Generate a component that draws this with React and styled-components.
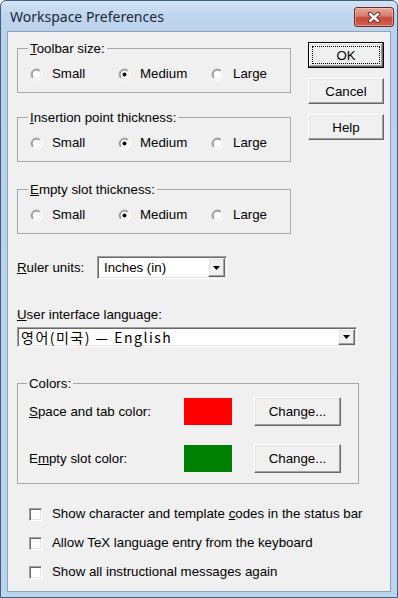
import styled, { createGlobalStyle, css } from 'styled-components'

const GlobalStyle = createGlobalStyle`
  html, body {
    margin: 0;
    padding: 0;
    background: #fff;
  }
  body {
    font-family: "Liberation Sans", Arial, sans-serif;
    font-size: 13.3px;
    color: #000;
  }
`

const sunken = css`
  box-sizing: border-box;
  border: 1px solid;
  border-color: #a0a0a0 #fff #fff #a0a0a0;
  box-shadow: inset 1px 1px #696969, inset -1px -1px #e3e3e3;
`

const raised = css`
  box-sizing: border-box;
  border: 1px solid;
  border-color: #fff #696969 #696969 #fff;
  box-shadow: inset -1px -1px #a0a0a0, inset 1px 1px #e3e3e3;
  background: #f0f0f0;
`

const RadioMark = ({ checked }) => (
  <svg width="13" height="13" viewBox="0 0 13 13">
    <circle cx="6.5" cy="6.5" r="5.5" fill="#fff" />
    <path d="M2.6 10.4 A5.5 5.5 0 0 1 10.4 2.6" stroke="#a0a0a0" fill="none" />
    <path d="M3.3 9.7 A4.5 4.5 0 0 1 9.7 3.3" stroke="#6e6e6e" fill="none" />
    <path d="M10.4 2.6 A5.5 5.5 0 0 1 2.6 10.4" stroke="#fff" fill="none" />
    <path d="M9.7 3.3 A4.5 4.5 0 0 1 3.3 9.7" stroke="#e3e3e3" fill="none" />
    {checked && <circle cx="6.5" cy="6.5" r="2" fill="#000" />}
  </svg>
)

const Arrow = () => (
  <svg width="7" height="4" viewBox="0 0 7 4">
    <path d="M0 0 H7 L3.5 4 Z" fill="#000" />
  </svg>
)

const CloseGlyph = () => (
  <svg width="14" height="11" viewBox="0 0 14 11">
    <path d="M3 2 L11 9 M11 2 L3 9" stroke="#6a2219" strokeWidth="4.2" strokeLinecap="round" />
    <path d="M3 2 L11 9 M11 2 L3 9" stroke="#fff" strokeWidth="2.4" strokeLinecap="round" />
  </svg>
)

const radioGroups = [
  { title: 'Toolbar size:', key: 'T', rest: 'oolbar size:' },
  { title: 'Insertion point thickness:', key: 'I', rest: 'nsertion point thickness:' },
  { title: 'Empty slot thickness:', key: 'E', rest: 'mpty slot thickness:' }
]

const sizes = ['Small', 'Medium', 'Large']

export default function App() {
  return (
    <>
      <GlobalStyle />
      <Window>
        <TitleBar>
          <Title>Workspace Preferences</Title>
          <CloseButton>
            <CloseGlyph />
          </CloseButton>
        </TitleBar>

        <Client>
          <Top>
            <LeftColumn>
              {radioGroups.map((group, index) => (
                <Group key={group.title} $gap={index === 0 ? 0 : index === 1 ? 17 : 20}>
                  <Legend>
                    <u>{group.key}</u>
                    {group.rest}
                  </Legend>
                  <RadioRow>
                    {sizes.map(size => (
                      <RadioItem key={size}>
                        <RadioMark checked={size === 'Medium'} />
                        {size}
                      </RadioItem>
                    ))}
                  </RadioRow>
                </Group>
              ))}
            </LeftColumn>

            <ButtonColumn>
              <Button $default>
                <Caption $focus>OK</Caption>
              </Button>
              <Button>
                <Caption>Cancel</Caption>
              </Button>
              <Button>
                <Caption>Help</Caption>
              </Button>
            </ButtonColumn>
          </Top>

          <RulerRow>
            <RulerLabel>
              <u>R</u>uler units:
            </RulerLabel>
            <Dropdown $width={130} $height={23}>
              <DropValue $pad={5}>Inches (in)</DropValue>
              <DropButton>
                <Arrow />
              </DropButton>
            </Dropdown>
          </RulerRow>

          <FieldLabel>
            <u>U</u>ser interface language:
          </FieldLabel>
          <LanguageBox>
            <Dropdown $width={340} $height={20}>
              <DropValue $pad={2} $korean>
                영어(미국) — English
              </DropValue>
              <DropButton>
                <Arrow />
              </DropButton>
            </Dropdown>
          </LanguageBox>

          <ColorGroup>
            <Legend>Colors:</Legend>
            <ColorRows>
              <ColorRow>
                <ColorLabel>
                  <u>S</u>pace and tab color:
                </ColorLabel>
                <Swatch $color="#ff0000" />
                <ChangeButton>
                  <Caption>Change...</Caption>
                </ChangeButton>
              </ColorRow>
              <ColorRow>
                <ColorLabel>
                  E<u>m</u>pty slot color:
                </ColorLabel>
                <Swatch $color="#008000" />
                <ChangeButton>
                  <Caption>Change...</Caption>
                </ChangeButton>
              </ColorRow>
            </ColorRows>
          </ColorGroup>

          <CheckList>
            <CheckItem>
              <CheckBox />
              <span>
                Show character and template <u>c</u>odes in the status bar
              </span>
            </CheckItem>
            <CheckItem>
              <CheckBox />
              <span>Allow TeX language entry from the keyboard</span>
            </CheckItem>
            <CheckItem>
              <CheckBox />
              <span>Show all instructional messages again</span>
            </CheckItem>
          </CheckList>
        </Client>
      </Window>
    </>
  )
}

const Window = styled.div`
  box-sizing: border-box;
  width: 398px;
  height: 598px;
  display: flex;
  flex-direction: column;
  border: 1px solid #3f5f7e;
  border-radius: 6px 6px 0 0;
  background: linear-gradient(to bottom, #d3e3f4 0, #c0d6ee 14px, #bad1ea 40px, #bcd3ec 100%);
  overflow: hidden;
`

const TitleBar = styled.div`
  height: 30px;
  flex: none;
  display: flex;
  align-items: center;
  padding-left: 9px;
`

const Title = styled.span`
  font-family: "Noto Sans", "Open Sans", sans-serif;
  font-size: 14px;
  color: #1b2838;
`

const CloseButton = styled.div`
  box-sizing: border-box;
  width: 40px;
  height: 20px;
  margin: 6px 3px 0 auto;
  align-self: flex-start;
  display: flex;
  align-items: center;
  justify-content: center;
  border: 1px solid #6e2a22;
  border-radius: 3px;
  background: linear-gradient(to bottom, #e6a99b 0%, #d67a6b 45%, #c4473a 55%, #d2624f 100%);
  box-shadow: inset 0 0 0 1px rgba(255, 220, 210, 0.45);
`

const Client = styled.div`
  flex: 1;
  margin: 0 6px 5px;
  border: 1px solid #8da3ba;
  background: #f0f0f0;
  display: flex;
  flex-direction: column;
`

const Top = styled.div`
  display: flex;
  gap: 17px;
  padding: 9px 0 0 9px;
`

const LeftColumn = styled.div`
  width: 274px;
  display: flex;
  flex-direction: column;
`

const Group = styled.fieldset`
  margin: ${({ $gap }) => $gap}px 0 0;
  padding: 10px 0 10px 12px;
  border: 1px solid #a8a8a8;
  min-width: 0;
`

const Legend = styled.legend`
  padding: 0 2px;
  margin-left: -2px;
  line-height: 15px;
`

const RadioRow = styled.div`
  display: grid;
  grid-template-columns: 88px 93px auto;
  align-items: center;
  height: 16px;
`

const RadioItem = styled.label`
  display: flex;
  align-items: center;
  gap: 9px;
  line-height: 16px;
`

const ButtonColumn = styled.div`
  width: 76px;
  margin-top: 1px;
  display: flex;
  flex-direction: column;
  gap: 10px;
`

const Button = styled.div`
  ${raised};
  height: 26px;
  display: flex;
  padding: 3px;

  ${({ $default }) =>
    $default && {
      border: '1px solid #000',
      'box-shadow':
        'inset -1px -1px #696969, inset 1px 1px #fff, inset -2px -2px #a0a0a0, inset 2px 2px #e3e3e3'
    }}
`

const Caption = styled.span`
  flex: 1;
  display: flex;
  align-items: center;
  justify-content: center;
  border: 1px dotted ${({ $focus }) => ($focus ? '#000' : 'transparent')};
  line-height: 15px;
`

const RulerRow = styled.div`
  display: flex;
  align-items: center;
  margin-top: 22px;
  padding-left: 9px;
`

const RulerLabel = styled.span`
  width: 80px;
  line-height: 15px;
`

const Dropdown = styled.div`
  ${sunken};
  width: ${({ $width }) => $width}px;
  height: ${({ $height }) => $height}px;
  padding: 1px;
  display: flex;
  background: #fff;
`

const DropValue = styled.span`
  flex: 1;
  display: flex;
  align-items: center;
  padding-left: ${({ $pad }) => $pad}px;
  white-space: nowrap;

  ${({ $korean }) =>
    $korean && {
      'font-family': '"Noto Sans CJK KR", "Liberation Sans", sans-serif',
      'font-size': '14px',
      'letter-spacing': '1.5px'
    }}
`

const DropButton = styled.span`
  ${raised};
  width: 17px;
  display: flex;
  align-items: center;
  justify-content: center;
`

const FieldLabel = styled.div`
  margin-top: 28px;
  padding-left: 9px;
  line-height: 15px;
`

const LanguageBox = styled.div`
  margin-top: 5px;
  padding-left: 9px;
`

const ColorGroup = styled.fieldset`
  width: 342px;
  box-sizing: border-box;
  margin: 29px 0 0 9px;
  padding: 6px 0 10px 11px;
  border: 1px solid #a8a8a8;
  min-width: 0;
`

const ColorRows = styled.div`
  display: flex;
  flex-direction: column;
  gap: 18px;
`

const ColorRow = styled.div`
  display: flex;
  align-items: center;
  height: 29px;
`

const ColorLabel = styled.span`
  width: 155px;
  line-height: 15px;
`

const Swatch = styled.span`
  width: 48px;
  height: 27px;
  background: ${({ $color }) => $color};
`

const ChangeButton = styled(Button)`
  width: 87px;
  height: 29px;
  margin-left: 22px;
`

const CheckList = styled.div`
  display: flex;
  flex-direction: column;
  gap: 13px;
  margin-top: 22px;
  padding-left: 21px;
`

const CheckItem = styled.label`
  display: flex;
  align-items: center;
  gap: 10px;
  height: 16px;
  line-height: 16px;
`

const CheckBox = styled.span`
  ${sunken};
  width: 13px;
  height: 13px;
  background: #fff;
`
